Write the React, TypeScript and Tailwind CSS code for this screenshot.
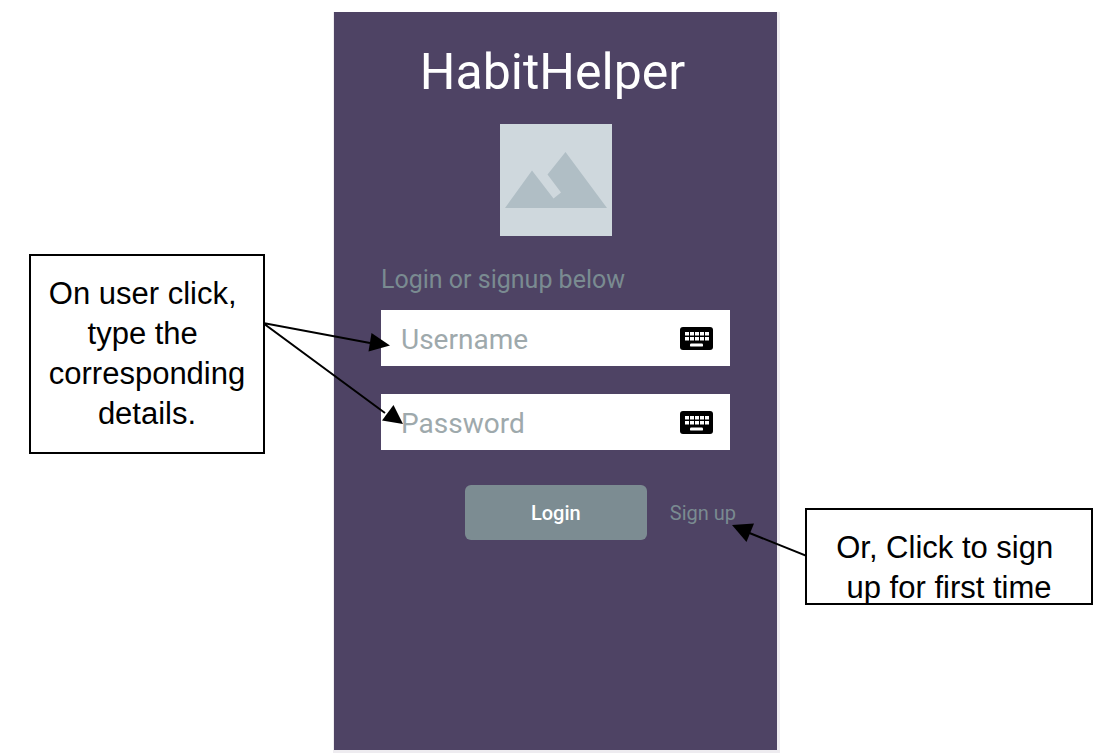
import type { ReactNode } from "react";

function KeyboardIcon() {
  const columns = [5, 10, 15, 20, 25];
  return (
    <svg viewBox="0 0 33 23" className="h-[23px] w-[33px] shrink-0" aria-hidden="true">
      <rect width="33" height="23" rx="3" fill="#000" />
      {columns.map((x) => (
        <g key={x} fill="#fff">
          <rect x={x} y="5" width="4" height="3.5" />
          <rect x={x} y="10" width="4" height="3.5" />
        </g>
      ))}
      <rect x="10" y="16.4" width="13" height="3.2" rx="1.2" fill="#fff" />
    </svg>
  );
}

function ImagePlaceholder() {
  return (
    <svg viewBox="0 0 112 112" className="h-28 w-28" role="img" aria-label="Logo">
      <rect width="112" height="112" fill="#cfd8dd" />
      <path
        d="M5 84 L32 46.5 L53.5 74.5 L61 68.5 L47.5 50.5 L65.5 28 L107 84 Z"
        fill="#b0bec5"
      />
    </svg>
  );
}

function Field({ type, label }: { type: string; label: string }) {
  return (
    <div className="flex h-14 items-center bg-white pr-[17px] pl-5">
      <input
        type={type}
        aria-label={label}
        placeholder={label}
        className="h-full min-w-0 flex-1 bg-transparent pt-0.5 text-[28px] text-gray-700 outline-none placeholder:text-[#9ea9ac]"
      />
      <KeyboardIcon />
    </div>
  );
}

function Note({ lines, children }: { lines: string[]; children: ReactNode }) {
  return (
    <aside className="relative h-full w-full border-2 border-black bg-white">
      <div className="pt-[18px] text-center text-[31px] leading-10 text-black">
        {lines.map((line) => (
          <p key={line} className="whitespace-pre">
            {line}
          </p>
        ))}
      </div>
      {children}
    </aside>
  );
}

export default function App() {
  return (
    <main className="flex min-h-screen items-start bg-white pt-3 pl-[29px] font-['Liberation_Sans',sans-serif]">
      <div className="z-10 mt-[242px] h-[200px] w-[236px] shrink-0">
        <Note lines={["On user click, ", "type the ", "corresponding", "details."]}>
          <svg
            viewBox="0 0 140 110"
            className="pointer-events-none absolute top-[66px] left-full h-[110px] w-[140px]"
            aria-hidden="true"
          >
            <path d="M0 1 L107 21 M0 1 L122 91" stroke="#000" strokeWidth="2" fill="none" />
            <path d="M127 23.5 L108.5 11 L105.5 29.5 Z" />
            <path d="M140 102 L130.5 83 L119 98.5 Z" />
          </svg>
        </Note>
      </div>

      <section className="ml-[68px] flex h-[741px] w-[447px] shrink-0 flex-col border-r-3 border-b-3 border-l border-[#eeecf0] bg-[#4e4364] pt-[30px] pr-[47px] pl-[47px] font-[Roboto,sans-serif]">
        <h1 className="pr-1.5 text-center text-[50px] leading-[60px] text-white">HabitHelper</h1>
        <div className="mt-[22px] flex justify-center">
          <ImagePlaceholder />
        </div>
        <form className="flex flex-col" onSubmit={(event) => event.preventDefault()}>
          <p className="mt-7 text-[25px] leading-8 text-[#7a8b91]">Login or signup below</p>
          <div className="mt-[14px] flex flex-col gap-7">
            <Field type="text" label="Username" />
            <Field type="password" label="Password" />
          </div>
          <div className="mt-[35px] -mr-1.5 flex items-center justify-end gap-[23px]">
            <button
              type="submit"
              className="h-[55px] w-[182px] rounded-md bg-[#7c8c92] text-[20px] font-medium text-white"
            >
              Login
            </button>
            <a href="#signup" className="text-[20px] text-[#7a8b91]">
              Sign up
            </a>
          </div>
        </form>
      </section>

      <div className="z-10 mt-[496px] ml-[25px] h-[97px] w-[288px] shrink-0">
        <Note lines={["Or, Click to sign ", "up for first time"]}>
          <svg
            viewBox="0 0 76 40"
            className="pointer-events-none absolute top-[10px] right-full h-10 w-[76px]"
            aria-hidden="true"
          >
            <path d="M76 36 L16 12" stroke="#000" strokeWidth="2" fill="none" />
            <path d="M1 5 L23 3.5 L15.5 22 Z" />
          </svg>
        </Note>
      </div>
    </main>
  );
}
